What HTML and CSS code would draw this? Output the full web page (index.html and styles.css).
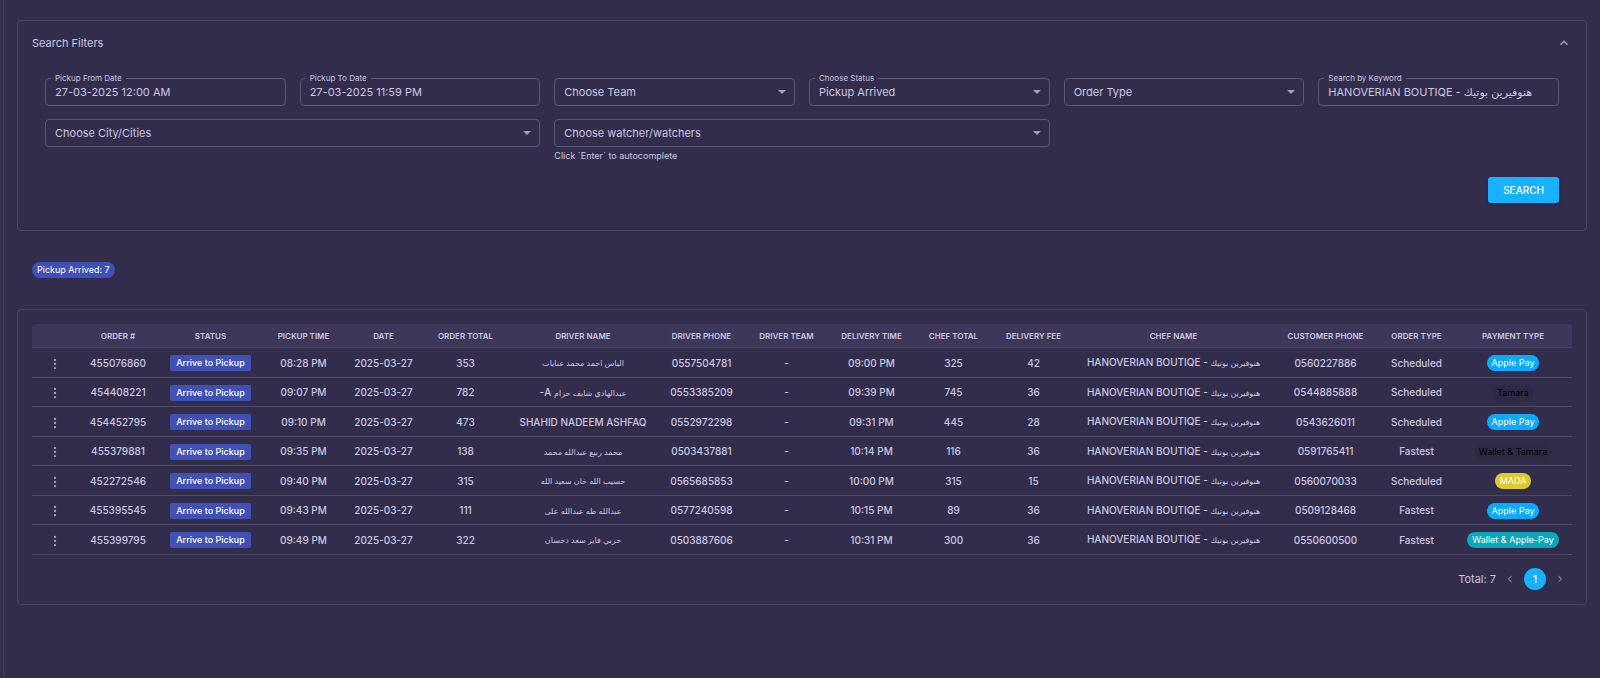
FILE: index.html
```html
<!DOCTYPE html>
<html lang="en">
<head>
  <meta charset="UTF-8" />
  <meta name="viewport" content="width=device-width, initial-scale=1.0"/>
  <title>Orders</title>
  <link rel="stylesheet" href="styles.css">
</head>
<body>

  <main class="page">

    <section class="card">
      <div class="card-head">
        <h2>Search Filters</h2>
        <button class="icon-btn" id="toggleBtn" type="button" aria-label="Collapse filters">
          <svg width="16" height="16" viewBox="0 0 24 24" fill="currentColor"><path d="M7.41 15.41L12 10.83l4.59 4.58L18 14l-6-6-6 6z"/></svg>
        </button>
      </div>

      <form class="filters" id="filters">
        <div class="field">
          <label for="from">Pickup From Date</label>
          <input type="text" id="from" value="27-03-2025 12:00 AM" />
        </div>
        <div class="field">
          <label for="to">Pickup To Date</label>
          <input type="text" id="to" value="27-03-2025 11:59 PM" />
        </div>
        <div class="field select">
          <select id="team" aria-label="Choose Team"><option>Choose Team</option></select>
        </div>
        <div class="field select">
          <label for="status">Choose Status</label>
          <select id="status"><option>Pickup Arrived</option></select>
        </div>
        <div class="field select">
          <select id="type" aria-label="Order Type"><option>Order Type</option></select>
        </div>
        <div class="field">
          <label for="keyword">Search by Keyword</label>
          <input type="text" id="keyword" value="HANOVERIAN BOUTIQE - هنوفيرين بوتيك" />
        </div>
        <div class="field select wide">
          <select id="city" aria-label="Choose City/Cities"><option>Choose City/Cities</option></select>
        </div>
        <div class="field select wide">
          <select id="watcher" aria-label="Choose watcher/watchers" aria-describedby="watcherHelp"><option>Choose watcher/watchers</option></select>
          <p class="help" id="watcherHelp">Click `Enter` to autocomplete</p>
        </div>
        <div class="actions">
          <button class="search-btn" type="submit">SEARCH</button>
        </div>
      </form>
    </section>

    <div class="summary">
      <span class="chip indigo">Pickup Arrived: 7</span>
    </div>

    <section class="card orders">
      <table>
        <colgroup>
          <col class="c-menu"><col class="c-order"><col class="c-status"><col class="c-pickup">
          <col class="c-date"><col class="c-total"><col class="c-driver"><col class="c-phone">
          <col class="c-team"><col class="c-delivery"><col class="c-chef-total"><col class="c-fee">
          <col class="c-chef"><col class="c-customer"><col class="c-type"><col class="c-payment">
        </colgroup>
        <thead>
          <tr>
            <th></th>
            <th>ORDER #</th>
            <th>STATUS</th>
            <th>PICKUP TIME</th>
            <th>DATE</th>
            <th>ORDER TOTAL</th>
            <th>DRIVER NAME</th>
            <th>DRIVER PHONE</th>
            <th>DRIVER TEAM</th>
            <th>DELIVERY TIME</th>
            <th>CHEF TOTAL</th>
            <th>DELIVERY FEE</th>
            <th>CHEF NAME</th>
            <th>CUSTOMER PHONE</th>
            <th>ORDER TYPE</th>
            <th>PAYMENT TYPE</th>
          </tr>
        </thead>
        <tbody>
          <tr>
            <td><button class="icon-btn" type="button" aria-label="Order menu"><svg width="14" height="14" viewBox="0 0 24 24" fill="currentColor"><circle cx="12" cy="5" r="2"/><circle cx="12" cy="12" r="2"/><circle cx="12" cy="19" r="2"/></svg></button></td>
            <td>455076860</td>
            <td><span class="tag">Arrive to Pickup</span></td>
            <td>08:28 PM</td>
            <td>2025-03-27</td>
            <td>353</td>
            <td><span class="ar" dir="rtl">الياس احمد محمد عنايات</span></td>
            <td>0557504781</td>
            <td>-</td>
            <td>09:00 PM</td>
            <td>325</td>
            <td>42</td>
            <td>HANOVERIAN BOUTIQE - <span class="ar">هنوفيرين بوتيك</span></td>
            <td>0560227886</td>
            <td>Scheduled</td>
            <td><span class="chip blue">Apple Pay</span></td>
          </tr>
          <tr>
            <td><button class="icon-btn" type="button" aria-label="Order menu"><svg width="14" height="14" viewBox="0 0 24 24" fill="currentColor"><circle cx="12" cy="5" r="2"/><circle cx="12" cy="12" r="2"/><circle cx="12" cy="19" r="2"/></svg></button></td>
            <td>454408221</td>
            <td><span class="tag">Arrive to Pickup</span></td>
            <td>09:07 PM</td>
            <td>2025-03-27</td>
            <td>782</td>
            <td dir="rtl"><span class="ar">عبدالهادي شايف حزام</span> A-</td>
            <td>0553385209</td>
            <td>-</td>
            <td>09:39 PM</td>
            <td>745</td>
            <td>36</td>
            <td>HANOVERIAN BOUTIQE - <span class="ar">هنوفيرين بوتيك</span></td>
            <td>0544885888</td>
            <td>Scheduled</td>
            <td><span class="chip dark">Tamara</span></td>
          </tr>
          <tr>
            <td><button class="icon-btn" type="button" aria-label="Order menu"><svg width="14" height="14" viewBox="0 0 24 24" fill="currentColor"><circle cx="12" cy="5" r="2"/><circle cx="12" cy="12" r="2"/><circle cx="12" cy="19" r="2"/></svg></button></td>
            <td>454452795</td>
            <td><span class="tag">Arrive to Pickup</span></td>
            <td>09:10 PM</td>
            <td>2025-03-27</td>
            <td>473</td>
            <td>SHAHID NADEEM ASHFAQ</td>
            <td>0552972298</td>
            <td>-</td>
            <td>09:31 PM</td>
            <td>445</td>
            <td>28</td>
            <td>HANOVERIAN BOUTIQE - <span class="ar">هنوفيرين بوتيك</span></td>
            <td>0543626011</td>
            <td>Scheduled</td>
            <td><span class="chip blue">Apple Pay</span></td>
          </tr>
          <tr>
            <td><button class="icon-btn" type="button" aria-label="Order menu"><svg width="14" height="14" viewBox="0 0 24 24" fill="currentColor"><circle cx="12" cy="5" r="2"/><circle cx="12" cy="12" r="2"/><circle cx="12" cy="19" r="2"/></svg></button></td>
            <td>455379881</td>
            <td><span class="tag">Arrive to Pickup</span></td>
            <td>09:35 PM</td>
            <td>2025-03-27</td>
            <td>138</td>
            <td><span class="ar" dir="rtl">محمد ربيع عبدالله محمد</span></td>
            <td>0503437881</td>
            <td>-</td>
            <td>10:14 PM</td>
            <td>116</td>
            <td>36</td>
            <td>HANOVERIAN BOUTIQE - <span class="ar">هنوفيرين بوتيك</span></td>
            <td>0591765411</td>
            <td>Fastest</td>
            <td><span class="chip dark">Wallet &amp; Tamara</span></td>
          </tr>
          <tr>
            <td><button class="icon-btn" type="button" aria-label="Order menu"><svg width="14" height="14" viewBox="0 0 24 24" fill="currentColor"><circle cx="12" cy="5" r="2"/><circle cx="12" cy="12" r="2"/><circle cx="12" cy="19" r="2"/></svg></button></td>
            <td>452272546</td>
            <td><span class="tag">Arrive to Pickup</span></td>
            <td>09:40 PM</td>
            <td>2025-03-27</td>
            <td>315</td>
            <td><span class="ar" dir="rtl">حسيب الله خان سعيد الله</span></td>
            <td>0565685853</td>
            <td>-</td>
            <td>10:00 PM</td>
            <td>315</td>
            <td>15</td>
            <td>HANOVERIAN BOUTIQE - <span class="ar">هنوفيرين بوتيك</span></td>
            <td>0560070033</td>
            <td>Scheduled</td>
            <td><span class="chip yellow">MADA</span></td>
          </tr>
          <tr>
            <td><button class="icon-btn" type="button" aria-label="Order menu"><svg width="14" height="14" viewBox="0 0 24 24" fill="currentColor"><circle cx="12" cy="5" r="2"/><circle cx="12" cy="12" r="2"/><circle cx="12" cy="19" r="2"/></svg></button></td>
            <td>455395545</td>
            <td><span class="tag">Arrive to Pickup</span></td>
            <td>09:43 PM</td>
            <td>2025-03-27</td>
            <td>111</td>
            <td><span class="ar" dir="rtl">عبدالله طه عبدالله على</span></td>
            <td>0577240598</td>
            <td>-</td>
            <td>10:15 PM</td>
            <td>89</td>
            <td>36</td>
            <td>HANOVERIAN BOUTIQE - <span class="ar">هنوفيرين بوتيك</span></td>
            <td>0509128468</td>
            <td>Fastest</td>
            <td><span class="chip blue">Apple Pay</span></td>
          </tr>
          <tr>
            <td><button class="icon-btn" type="button" aria-label="Order menu"><svg width="14" height="14" viewBox="0 0 24 24" fill="currentColor"><circle cx="12" cy="5" r="2"/><circle cx="12" cy="12" r="2"/><circle cx="12" cy="19" r="2"/></svg></button></td>
            <td>455399795</td>
            <td><span class="tag">Arrive to Pickup</span></td>
            <td>09:49 PM</td>
            <td>2025-03-27</td>
            <td>322</td>
            <td><span class="ar" dir="rtl">حربي فايز سعد دخسان</span></td>
            <td>0503887606</td>
            <td>-</td>
            <td>10:31 PM</td>
            <td>300</td>
            <td>36</td>
            <td>HANOVERIAN BOUTIQE - <span class="ar">هنوفيرين بوتيك</span></td>
            <td>0550600500</td>
            <td>Fastest</td>
            <td><span class="chip teal">Wallet &amp; Apple-Pay</span></td>
          </tr>
        </tbody>
      </table>

      <nav class="pager" aria-label="Pagination">
        <span>Total: 7</span>
        <button class="page-btn" type="button" aria-label="Previous page" disabled>
          <svg width="14" height="14" viewBox="0 0 24 24" fill="currentColor"><path d="M15.41 7.41L14 6l-6 6 6 6 1.41-1.41L10.83 12z"/></svg>
        </button>
        <button class="page-btn current" type="button">1</button>
        <button class="page-btn" type="button" aria-label="Next page" disabled>
          <svg width="14" height="14" viewBox="0 0 24 24" fill="currentColor"><path d="M10 6L8.59 7.41 13.17 12l-4.58 4.59L10 18l6-6z"/></svg>
        </button>
      </nav>
    </section>

  </main>

  <script>
    document.getElementById('toggleBtn').addEventListener('click', () => {
      document.getElementById('filters').classList.toggle('closed');
    });
    document.getElementById('filters').addEventListener('submit', (e) => e.preventDefault());
  </script>

</body>
</html>
```
FILE: styles.css
```css
* {
  box-sizing: border-box;
}

body {
  margin: 0;
  font-family: Inter, 'DejaVu Sans', sans-serif;
  font-size: 11px;
  line-height: 16px;
  background: #312d4b;
  color: #cbc7e1;
}

button, input, select {
  font-family: inherit;
  color: inherit;
}

.page {
  min-height: 100vh;
  margin-left: 3px;
  padding: 20px 13px 20px;
  border-left: 1px solid #433f5f;
}

.card {
  border: 1px solid #474363;
  border-radius: 4px;
  padding: 14px;
}

.card-head {
  display: flex;
  justify-content: space-between;
  align-items: center;
}

.card-head h2 {
  margin: 0;
  font-size: 11px;
  font-weight: 400;
}

.icon-btn {
  display: inline-flex;
  padding: 0;
  border: none;
  background: none;
  color: #a29eba;
  cursor: pointer;
}

/* filters */

.filters {
  display: grid;
  grid-template-columns: repeat(6, 1fr);
  column-gap: 14px;
  row-gap: 13px;
  padding: 27px 13px 13px;
}

.filters.closed {
  display: none;
}

.field {
  position: relative;
}

.wide {
  grid-column: span 2;
}

.field label {
  position: absolute;
  top: -6px;
  left: 6px;
  padding: 0 4px;
  font-size: 8px;
  line-height: 12px;
  background: #312d4b;
}

.field input,
.field select {
  display: block;
  width: 100%;
  height: 28px;
  padding: 0 9px;
  font-size: 11px;
  background: none;
  border: 1px solid #5a5675;
  border-radius: 4px;
  appearance: none;
  outline: none;
}

.field input:focus,
.field select:focus {
  border-color: #16b1ff;
}

.select::after {
  content: '';
  position: absolute;
  top: 12px;
  right: 9px;
  border: 4px solid transparent;
  border-top-color: #a29eba;
  border-bottom: none;
  pointer-events: none;
}

.help {
  margin: 3px 0 0;
  font-size: 9px;
  line-height: 12px;
}

.actions {
  grid-column: 1 / -1;
  display: flex;
  justify-content: flex-end;
  padding-top: 2px;
}

.search-btn {
  height: 26px;
  padding: 0 15px;
  border: none;
  border-radius: 3px;
  font-size: 10px;
  font-weight: 500;
  color: #fff;
  background: #16b1ff;
  box-shadow: 0 1px 3px rgba(19, 17, 32, 0.3);
  cursor: pointer;
}

/* chips */

.summary {
  display: flex;
  padding: 31px 15px;
}

.chip,
.tag {
  display: inline-block;
  padding: 0 5px;
  border-radius: 8px;
  font-size: 9px;
  font-weight: 400;
  line-height: 16px;
  color: #fff;
  vertical-align: middle;
}

.tag {
  padding: 0 6px;
  border-radius: 2px;
  font-weight: 500;
  background: #3f51b5;
}

.indigo {
  background: #3f51b5;
}

.blue {
  background: #0aabff;
}

.dark {
  color: #000;
  background: #2e2a45;
}

.yellow {
  background: #dccb2c;
}

.teal {
  background: #0ba7bd;
}

/* orders table */

table {
  width: 100%;
  table-layout: fixed;
  border-collapse: separate;
  border-spacing: 0;
}

.c-menu { width: 46px; }
.c-order { width: 80px; }
.c-status { width: 105px; }
.c-pickup { width: 81px; }
.c-date { width: 79px; }
.c-total { width: 85px; }
.c-driver { width: 150px; }
.c-phone { width: 87px; }
.c-team { width: 83px; }
.c-delivery { width: 87px; }
.c-chef-total { width: 77px; }
.c-fee { width: 83px; }
.c-chef { width: 197px; }
.c-customer { width: 107px; }
.c-type { width: 75px; }
.c-payment { width: 118px; }

thead th {
  height: 24px;
  padding: 0;
  font-size: 8px;
  font-weight: 600;
  line-height: 12px;
  background: #3d3759;
  border-bottom: 1px solid #474363;
}

th:first-child {
  border-top-left-radius: 4px;
}

th:last-child {
  border-top-right-radius: 4px;
}

td {
  height: 29px;
  padding: 0;
  font-size: 10px;
  font-weight: 500;
  text-align: center;
  white-space: nowrap;
  border-bottom: 1px solid #4d4968;
}

tr:nth-child(odd) td {
  height: 30px;
}

td .icon-btn {
  vertical-align: middle;
}

.ar {
  font-size: 8px;
}

.pager {
  display: flex;
  justify-content: flex-end;
  align-items: center;
  gap: 3px;
  padding: 13px 1px 0 0;
}

.page-btn {
  display: flex;
  justify-content: center;
  align-items: center;
  width: 22px;
  height: 22px;
  padding: 0;
  border: none;
  border-radius: 50%;
  font-size: 11px;
  background: none;
  cursor: pointer;
}

.page-btn:disabled {
  color: #7d799a;
  cursor: default;
}

.current {
  color: #fff;
  background: #16b1ff;
}
```
